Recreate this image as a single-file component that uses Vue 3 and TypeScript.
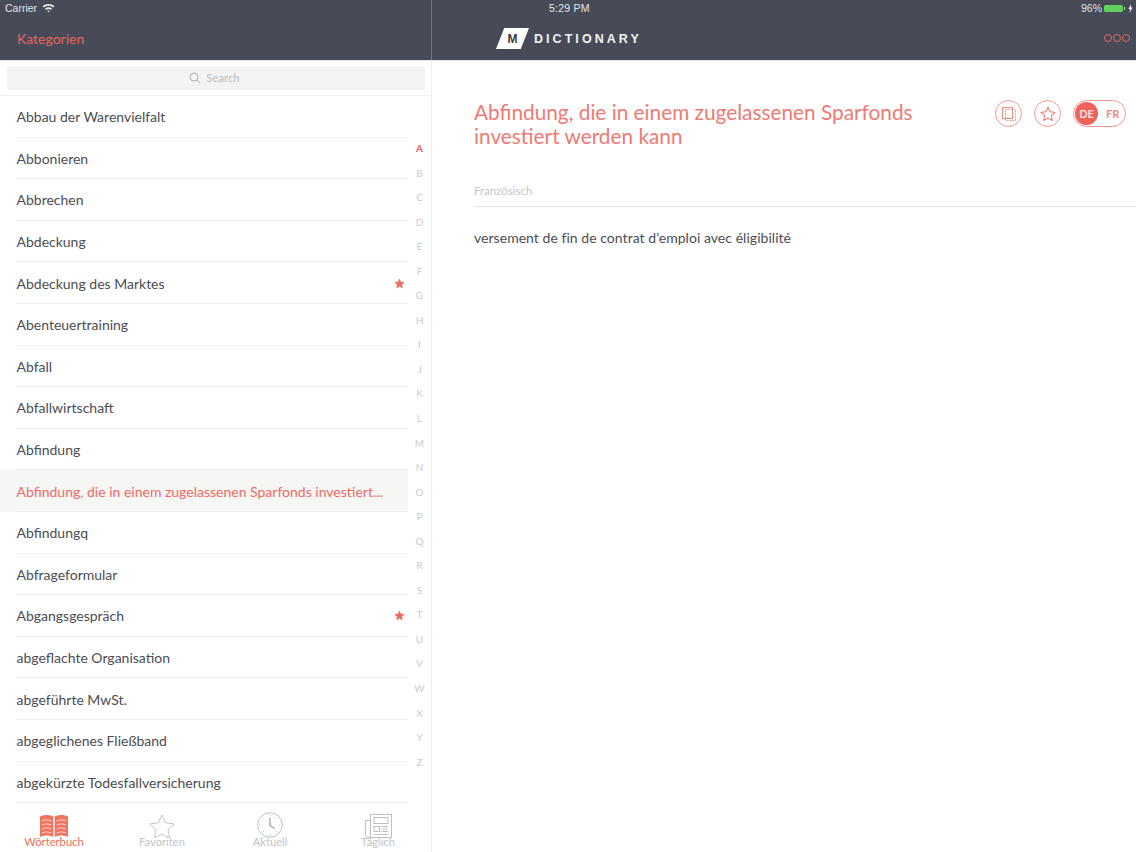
<script setup lang="ts">
interface Row { label: string; star?: boolean; active?: boolean }
const rows: Row[] = [
  { label: 'Abbau der Warenvielfalt' },
  { label: 'Abbonieren' },
  { label: 'Abbrechen' },
  { label: 'Abdeckung' },
  { label: 'Abdeckung des Marktes', star: true },
  { label: 'Abenteuertraining' },
  { label: 'Abfall' },
  { label: 'Abfallwirtschaft' },
  { label: 'Abfindung' },
  { label: 'Abfindung, die in einem zugelassenen Sparfonds investiert...', active: true },
  { label: 'Abfindungq' },
  { label: 'Abfrageformular' },
  { label: 'Abgangsgespräch', star: true },
  { label: 'abgeflachte Organisation' },
  { label: 'abgeführte MwSt.' },
  { label: 'abgeglichenes Fließband' },
  { label: 'abgekürzte Todesfallversicherung' },
]
const letters = 'ABCDEFGHIJKLMNOPQRSTUVWXYZ'.split('')
</script>

<template>
  <div class="app">
    <header class="top">
      <div class="top-left">
        <div class="status status-left">
          <span>Carrier</span>
          <svg width="13" height="10" viewBox="0 0 13 10" class="wifi">
            <path d="M0.6 3.2C4 0.2 9 0.2 12.4 3.2L11.2 4.5C8.4 2.1 4.6 2.1 1.8 4.5Z" fill="#e8e9ec" />
            <path d="M3 5.6C5 3.9 8 3.9 10 5.6L8.8 6.9C7.5 5.8 5.5 5.8 4.2 6.9Z" fill="#e8e9ec" />
            <path d="M5.2 7.9C6 7.2 7 7.2 7.8 7.9L6.5 9.3Z" fill="#e8e9ec" />
          </svg>
        </div>
        <div class="nav-left">Kategorien</div>
      </div>
      <div class="top-right">
        <div class="status status-right">
          <span class="clock">5:29 PM</span>
          <span class="batt">
            <span>96%</span>
            <span class="cell"><span class="fill"></span></span>
            <svg width="5" height="9" viewBox="0 0 5 9"><path d="M3 0L0.4 5H2L1.6 9L4.6 3.6H2.8Z" fill="#e8e9ec" /></svg>
          </span>
        </div>
        <div class="nav-right">
          <div class="logo">
            <span class="logo-m"><span>M</span></span>
            <span class="logo-t">DICTIONARY</span>
          </div>
          <div class="dots"><i></i><i></i><i></i></div>
        </div>
      </div>
    </header>

    <div class="body">
      <aside class="side">
        <div class="search-wrap">
          <div class="search">
            <svg width="12" height="12" viewBox="0 0 12 12" fill="none" stroke="#a9abaf" stroke-width="1">
              <circle cx="5" cy="5" r="4" />
              <path d="M8 8L11.2 11.2" />
            </svg>
            <span class="search-label">Search</span>
          </div>
        </div>
        <div class="list-wrap">
          <ul class="list">
            <li v-for="r in rows" :key="r.label" class="row" :class="{ active: r.active }">
              <span class="row-label">{{ r.label }}</span>
              <svg v-if="r.star" class="row-star" width="11" height="11" viewBox="0 0 24 24">
                <path d="M12 1l3.4 7.3 7.9 1-5.8 5.5 1.5 7.9L12 18.8l-7 3.9 1.5-7.9L.7 9.3l7.9-1z" fill="#f0705f" />
              </svg>
            </li>
          </ul>
          <div class="index">
            <span v-for="l in letters" :key="l" :class="{ on: l === 'A' }">{{ l }}</span>
          </div>
        </div>
        <nav class="tabs">
          <div class="tab on">
            <svg width="30" height="24" viewBox="0 0 30 24">
              <path d="M1 2.5C5 0.5 10 0.5 14.3 2.5V23C10 21 5 21 1 23Z" fill="#f0745f" />
              <path d="M15.7 2.5C20 0.5 25 0.5 29 2.5V23C25 21 20 21 15.7 23Z" fill="#f0745f" />
              <g fill="none" stroke="#fbd9d2" stroke-width="1">
                <path d="M3 7C6 5.6 9 5.6 12.4 7M3 11C6 9.6 9 9.6 12.4 11M3 15C6 13.6 9 13.6 12.4 15M3 19C6 17.6 9 17.6 12.4 19" />
                <path d="M17.6 7C21 5.6 24 5.6 27 7M17.6 11C21 9.6 24 9.6 27 11M17.6 15C21 13.6 24 13.6 27 15M17.6 19C21 17.6 24 17.6 27 19" />
              </g>
            </svg>
            <span>Wörterbuch</span>
          </div>
          <div class="tab">
            <svg width="26" height="24" viewBox="0 0 26 24">
              <path d="M13 1l3.7 7.8 8.5 1.1-6.2 5.9 1.6 8.2L13 20l-7.6 4 1.6-8.2L.8 9.9l8.5-1.1z" fill="none" stroke="#c4c6ca" stroke-width="1" />
            </svg>
            <span>Favoriten</span>
          </div>
          <div class="tab">
            <svg width="26" height="26" viewBox="0 0 26 26" fill="none" stroke="#bcbec3" stroke-width="1">
              <circle cx="13" cy="13" r="12.3" />
              <path d="M13 5.5V13.5L17.5 16.5" stroke-width="1.3" stroke="#9fa2a8" />
              <path d="M13 2.5V4M13 22V23.5M2.5 13H4M22 13H23.5M5.6 5.6L6.7 6.7M19.3 19.3L20.4 20.4M20.4 5.6L19.3 6.7M6.7 19.3L5.6 20.4" />
            </svg>
            <span>Aktuell</span>
          </div>
          <div class="tab">
            <svg width="27" height="24" viewBox="0 0 27 24" fill="none" stroke="#bcbec3" stroke-width="1">
              <path d="M5.5 23.5H2.5C1.4 23.5 0.5 22.6 0.5 21.5V6.5H5.5" />
              <rect x="5.5" y="0.5" width="21" height="23" />
              <rect x="9" y="3.5" width="14" height="6" />
              <rect x="9" y="12.5" width="5.5" height="5" />
              <path d="M16.5 12.5H23M16.5 15H23M16.5 17.5H23M9 20.5H23" />
            </svg>
            <span>Täglich</span>
          </div>
        </nav>
      </aside>

      <main class="detail">
        <div class="head">
          <h1>Abfindung, die in einem zugelassenen Sparfonds investiert werden kann</h1>
          <div class="actions">
            <button class="round">
              <svg width="18" height="18" viewBox="0 0 18 18" fill="none" stroke="#ec8a80" stroke-width="1">
                <rect x="2.5" y="2.5" width="10" height="11" />
                <rect x="5.5" y="4.5" width="10" height="11" stroke-dasharray="1.6 1.2" />
              </svg>
            </button>
            <button class="round">
              <svg width="16" height="16" viewBox="0 0 24 24">
                <path d="M12 2l3.1 6.6 7.2.9-5.3 5 1.4 7.2L12 18.2l-6.4 3.5L7 14.5l-5.3-5 7.2-.9z" fill="none" stroke="#ec7a70" stroke-width="1.6" />
              </svg>
            </button>
            <div class="toggle">
              <span class="lang de">DE</span>
              <span class="lang fr">FR</span>
            </div>
          </div>
        </div>
        <div class="section">Französisch</div>
        <p class="text">versement de fin de contrat d’emploi avec éligibilité</p>
      </main>
    </div>
  </div>
</template>

<style scoped>
.app {
  width: 1136px;
  height: 852px;
  display: flex;
  flex-direction: column;
  overflow: hidden;
  background: #fff;
  font-family: Lato, "Noto Sans", sans-serif;
  color: #4a4c52;
}
.top {
  height: 60px;
  flex: none;
  display: flex;
  background: #474b58;
  border-bottom: 1px solid #dfe3ea;
  box-sizing: content-box;
  margin-bottom: -1px;
}
.top-left {
  width: 431px;
  flex: none;
  border-right: 1px solid #73767f;
  display: flex;
  flex-direction: column;
}
.top-right {
  flex: 1;
  display: flex;
  flex-direction: column;
  min-width: 0;
}
.status {
  height: 16px;
  display: flex;
  align-items: center;
  font-family: "Liberation Sans", sans-serif;
  font-size: 10.5px;
  color: #e3e4e8;
}
.status-left {
  padding-left: 5px;
  gap: 5px;
}
.wifi {
  margin-top: -1px;
}
.status-right {
  position: relative;
  justify-content: flex-end;
  padding-right: 3px;
}
.clock {
  position: absolute;
  left: 117px;
  top: 2px;
  line-height: 13px;
  letter-spacing: 0.25px;
}
.batt {
  display: flex;
  align-items: center;
  gap: 2px;
}
.cell {
  width: 19px;
  height: 7px;
  background: #5fd25c;
  border-radius: 1.5px;
  position: relative;
  margin-right: 3px;
  display: block;
}
.fill {
  position: absolute;
  right: -2px;
  top: 2px;
  width: 1.5px;
  height: 3px;
  background: #d5d6da;
}
.nav-left {
  flex: 1;
  display: flex;
  align-items: center;
  padding-left: 17px;
  font-size: 14px;
  color: #e9635a;
}
.nav-right {
  flex: 1;
  display: flex;
  align-items: center;
  justify-content: space-between;
  padding: 1px 6px 0 64px;
}
.logo {
  display: flex;
  align-items: center;
  gap: 5px;
}
.logo-m {
  width: 33px;
  height: 21px;
  background: #fff;
  clip-path: polygon(25% 0, 100% 0, 75% 100%, 0 100%);
  display: flex;
  align-items: center;
  justify-content: center;
  font-family: "Liberation Sans", sans-serif;
  font-weight: 700;
  font-size: 12px;
  color: #3a3c42;
}
.logo-t {
  font-family: "Liberation Sans", sans-serif;
  font-weight: 700;
  font-size: 12.5px;
  letter-spacing: 3.05px;
  color: #f2f3f5;
}
.dots {
  display: flex;
  gap: 1px;
  margin-top: -1px;
}
.dots i {
  width: 8px;
  height: 8px;
  box-sizing: border-box;
  border: 1px solid #e8695f;
  border-radius: 50%;
  display: block;
}
.body {
  flex: 1;
  display: flex;
  min-height: 0;
}
.side {
  width: 431px;
  flex: none;
  border-right: 1px solid #eeeeef;
  display: flex;
  flex-direction: column;
}
.search-wrap {
  height: 36px;
  flex: none;
  box-sizing: border-box;
  padding: 6px 6px 5px 7px;
  border-bottom: 1px solid #eeeeef;
}
.search {
  height: 24px;
  background: #f3f4f3;
  border-radius: 3px;
  display: flex;
  align-items: center;
  justify-content: center;
  gap: 5px;
  font-size: 11px;
  letter-spacing: 0.15px;
  color: #b8babd;
  padding-right: 3px;
}
.search-label {
  line-height: 12px;
  margin-top: -1px;
}
.list-wrap {
  flex: 1;
  min-height: 0;
  display: flex;
  position: relative;
}
.list {
  list-style: none;
  margin: 0;
  padding: 0;
  width: 408px;
  flex: none;
}
.row {
  height: 41.6px;
  box-sizing: border-box;
  margin: 0;
  padding: 0 3px 0 16.5px;
  display: flex;
  align-items: center;
  justify-content: space-between;
  gap: 24px;
  font-size: 14px;
  color: #4b4d52;
  position: relative;
}
.row::after {
  content: "";
  position: absolute;
  left: 16px;
  right: 0;
  bottom: 0;
  height: 1px;
  background: #eeeeee;
}
.row.active {
  background: #f6f6f5;
  color: #ee6a62;
}
.row-label {
  white-space: nowrap;
  min-width: 0;
}
.row-star {
  flex: none;
}
.index {
  flex: 1;
  display: flex;
  flex-direction: column;
  align-items: center;
  gap: 0;
  padding-top: 40px;
  font-size: 10px;
  color: #c9cacc;
}
.index span {
  height: 24.56px;
  line-height: 24.56px;
  width: 22px;
  text-align: center;
}
.index span.on {
  color: #ec5f68;
  font-weight: 700;
}
.tabs {
  height: 49px;
  flex: none;
  display: grid;
  grid-template-columns: repeat(4, 108px);
}
.tab {
  display: flex;
  flex-direction: column;
  align-items: center;
  justify-content: flex-end;
  font-size: 11.2px;
  color: #c2c4c8;
  line-height: 12px;
  padding-bottom: 4px;
}
.tab.on {
  color: #ee6f5e;
}
.tab svg {
  flex: none;
  margin-bottom: -2px;
}
.detail {
  flex: 1;
  min-width: 0;
  padding: 40px 0 0 42px;
}
.head {
  display: flex;
  justify-content: space-between;
  align-items: flex-start;
  padding-right: 10px;
  height: 84px;
  box-sizing: content-box;
}
h1 {
  margin: 0;
  width: 470px;
  font-weight: 400;
  font-size: 20.8px;
  line-height: 24px;
  color: #ef7a73;
}
.actions {
  display: flex;
  align-items: center;
  gap: 12px;
  flex: none;
}
.round {
  width: 27px;
  height: 27px;
  padding: 0;
  border: 1px solid #ee9a92;
  border-radius: 50%;
  background: #fff;
  display: flex;
  align-items: center;
  justify-content: center;
}
.toggle {
  width: 53px;
  height: 27px;
  box-sizing: border-box;
  border: 1px solid #ee9a92;
  border-radius: 14px;
  display: flex;
  align-items: center;
  padding-left: 1px;
  font-size: 11px;
  font-weight: 700;
}
.lang {
  display: flex;
  align-items: center;
  justify-content: center;
}
.de {
  width: 23px;
  height: 23px;
  border-radius: 50%;
  background: #f0625a;
  color: #fbe4e1;
}
.fr {
  margin-left: 8px;
  color: #ee8a82;
}
.section {
  font-size: 11.5px;
  color: #c4c5c8;
  line-height: 13px;
  padding-bottom: 9px;
  border-bottom: 1px solid #e3e3e3;
}
.text {
  margin: 23px 0 0;
  font-size: 14px;
  letter-spacing: 0.04px;
  line-height: 16px;
  color: #4b4d52;
}
</style>
